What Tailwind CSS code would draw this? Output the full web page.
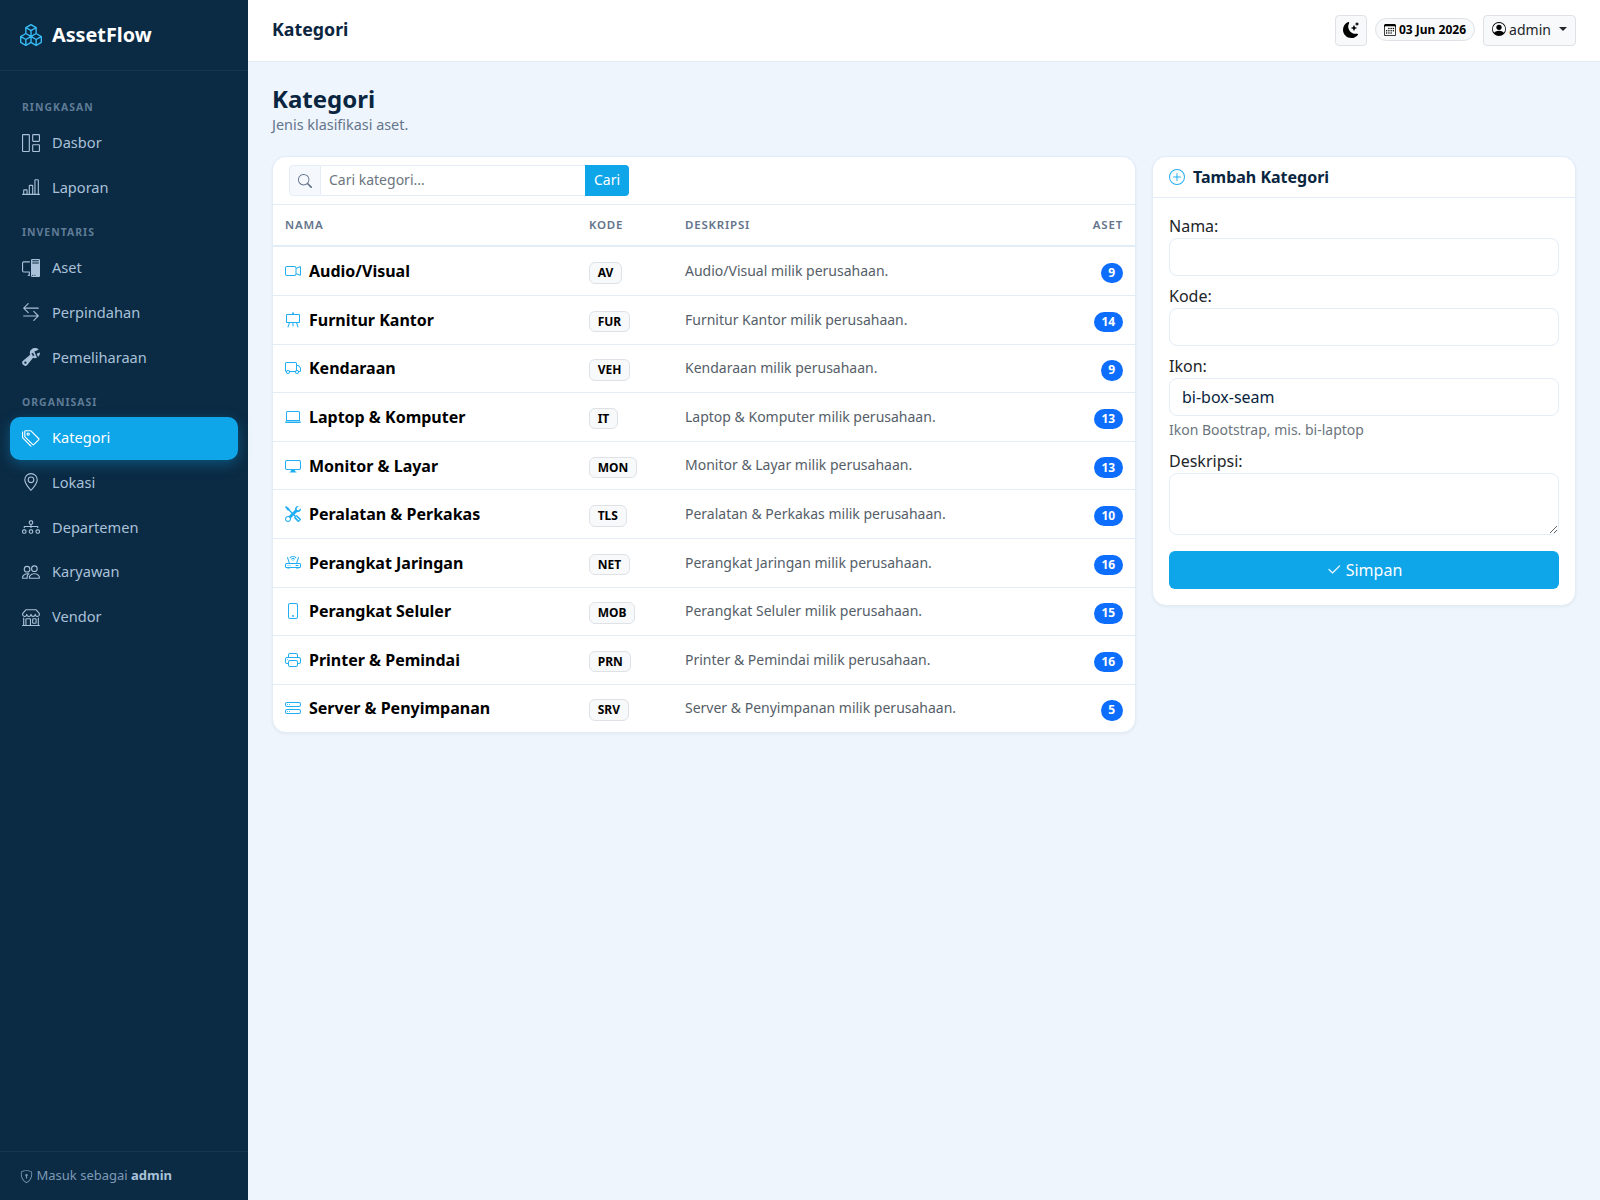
<!doctype html>
<html lang="id">
<head>
<meta charset="utf-8">
<title>Kategori - AssetFlow</title>
<script src="https://cdn.jsdelivr.net/npm/@tailwindcss/browser@4"></script>
</head>
<body class="font-['Noto_Sans',sans-serif] bg-[#eef5fc] text-[#212529]">
<div class="flex h-[1200px] w-[1600px] overflow-hidden">
  <aside class="flex w-[248px] shrink-0 flex-col bg-[#0b2a43] text-[#a9c1d9]">
    <div class="flex h-[71px] items-center gap-[10px] border-b border-[#173450] pb-px pl-[20px]">
      <svg class="size-[22px] text-[#38bdf8]" viewBox="0 0 16 16" fill="currentColor"><path d="M7.752.066a.5.5 0 0 1 .496 0l3.75 2.143a.5.5 0 0 1 .252.434v3.995l3.498 2A.5.5 0 0 1 16 9.07v4.286a.5.5 0 0 1-.252.434l-3.75 2.143a.5.5 0 0 1-.496 0l-3.502-2-3.502 2.001a.5.5 0 0 1-.496 0l-3.75-2.143A.5.5 0 0 1 0 13.357V9.071a.5.5 0 0 1 .252-.434L3.75 6.638V2.643a.5.5 0 0 1 .252-.434L7.752.066ZM4.25 7.504 1.508 9.071l2.742 1.567 2.742-1.567L4.25 7.504ZM7.5 9.933l-2.75 1.571v3.134l2.75-1.571V9.933Zm1 3.134 2.75 1.571v-3.134L8.5 9.933v3.134Zm.508-3.996 2.742 1.567 2.742-1.567-2.742-1.567-2.742 1.567Zm2.242-2.433V3.504L8.5 5.076V8.21l2.75-1.572ZM7.5 8.21V5.076L4.75 3.504v3.134L7.5 8.21ZM5.258 2.643 8 4.21l2.742-1.567L8 1.076 5.258 2.643ZM15 9.933l-2.75 1.571v3.134L15 13.067V9.933ZM3.75 14.638v-3.134L1 9.933v3.134l2.75 1.571Z"/></svg>
      <span class="text-[19.8px] font-bold text-white">AssetFlow</span>
    </div>
    <nav class="flex-1 px-[10px] pt-[14.8px]">
      <div class="px-3 pb-[5.6px] pt-[13px] text-[10.4px] font-bold leading-[16.8px] tracking-[0.1em] text-[#5f7c97]">RINGKASAN</div>
      <a class="mb-0.5 flex items-center gap-3 rounded-[10px] px-3 py-2.5 text-[14.6px] leading-[22.8px]"><svg class="size-[18px]" viewBox="0 0 16 16" fill="currentColor"><path d="M6 1H1v14h5V1zm9 0h-5v5h5V1zm0 9v5h-5v-5h5zM0 1a1 1 0 0 1 1-1h5a1 1 0 0 1 1 1v14a1 1 0 0 1-1 1H1a1 1 0 0 1-1-1V1zm9 0a1 1 0 0 1 1-1h5a1 1 0 0 1 1 1v5a1 1 0 0 1-1 1h-5a1 1 0 0 1-1-1V1zm1 8a1 1 0 0 0-1 1v5a1 1 0 0 0 1 1h5a1 1 0 0 0 1-1v-5a1 1 0 0 0-1-1h-5z"/></svg>Dasbor</a>
      <a class="mb-0.5 flex items-center gap-3 rounded-[10px] px-3 py-2.5 text-[14.6px] leading-[22.8px]"><svg class="size-[18px]" viewBox="0 0 16 16" fill="currentColor"><path d="M11 2a1 1 0 0 1 1-1h2a1 1 0 0 1 1 1v12h.5a.5.5 0 0 1 0 1H.5a.5.5 0 0 1 0-1H1v-3a1 1 0 0 1 1-1h2a1 1 0 0 1 1 1v3h1V7a1 1 0 0 1 1-1h2a1 1 0 0 1 1 1v7h1V2zm1 12h2V2h-2v12zm-3 0V7H7v7h2zm-5 0v-3H2v3h2z"/></svg>Laporan</a>
      <div class="px-3 pb-[5.6px] pt-[13px] text-[10.4px] font-bold leading-[16.8px] tracking-[0.1em] text-[#5f7c97]">INVENTARIS</div>
      <a class="mb-0.5 flex items-center gap-3 rounded-[10px] px-3 py-2.5 text-[14.6px] leading-[22.8px]"><svg class="size-[18px]" viewBox="0 0 16 16" fill="currentColor"><path d="M8 1a1 1 0 0 1 1-1h6a1 1 0 0 1 1 1v14a1 1 0 0 1-1 1H9a1 1 0 0 1-1-1V1Zm1 13.5a.5.5 0 1 0 1 0 .5.5 0 0 0-1 0Zm2 0a.5.5 0 1 0 1 0 .5.5 0 0 0-1 0ZM9.5 1a.5.5 0 0 0 0 1h5a.5.5 0 0 0 0-1h-5ZM9 3.5a.5.5 0 0 0 .5.5h5a.5.5 0 0 0 0-1h-5a.5.5 0 0 0-.5.5ZM1.5 2A1.5 1.5 0 0 0 0 3.5v7A1.5 1.5 0 0 0 1.5 12H6v2h-.5a.5.5 0 0 0 0 1H7v-4H1.5a.5.5 0 0 1-.5-.5v-7a.5.5 0 0 1 .5-.5H7V2H1.5Z"/></svg>Aset</a>
      <a class="mb-0.5 flex items-center gap-3 rounded-[10px] px-3 py-2.5 text-[14.6px] leading-[22.8px]"><svg class="size-[18px]" viewBox="0 0 16 16" fill="currentColor"><path d="M1 11.5a.5.5 0 0 0 .5.5h11.793l-3.147 3.146a.5.5 0 0 0 .708.708l4-4a.5.5 0 0 0 0-.708l-4-4a.5.5 0 0 0-.708.708L13.293 11H1.5a.5.5 0 0 0-.5.5zm14-7a.5.5 0 0 1-.5.5H2.707l3.147 3.146a.5.5 0 1 1-.708.708l-4-4a.5.5 0 0 1 0-.708l4-4a.5.5 0 1 1 .708.708L2.707 4H14.5a.5.5 0 0 1 .5.5z"/></svg>Perpindahan</a>
      <a class="mb-0.5 flex items-center gap-3 rounded-[10px] px-3 py-2.5 text-[14.6px] leading-[22.8px]"><svg class="size-[18px]" viewBox="0 0 16 16" fill="currentColor"><path d="M16 4.5a4.492 4.492 0 0 1-1.703 3.526L13 5l2.959-1.11c.027.2.041.403.041.61Z"/><path d="M11.5 9c.653 0 1.273-.139 1.833-.39L12 5.5 11 3l3.826-1.53A4.5 4.5 0 0 0 7.29 6.092l-6.116 5.096a2.583 2.583 0 1 0 3.638 3.638L9.908 8.71A4.49 4.49 0 0 0 11.5 9Zm-1.292-4.361-.596.893.809-.27a.25.25 0 0 1 .287.377l-.596.893.809-.27.158.475-1.5.5a.25.25 0 0 1-.287-.376l.596-.893-.809.27a.25.25 0 0 1-.287-.377l.596-.893-.809.27-.158-.475 1.5-.5a.25.25 0 0 1 .287.376ZM3 14a1 1 0 1 1 0-2 1 1 0 0 1 0 2Z"/></svg>Pemeliharaan</a>
      <div class="px-3 pb-[5.6px] pt-[13px] text-[10.4px] font-bold leading-[16.8px] tracking-[0.1em] text-[#5f7c97]">ORGANISASI</div>
      <a class="mb-px mt-px flex items-center gap-3 rounded-[10px] bg-[#0ea5e9] px-3 pb-[10.5px] pt-[9.5px] text-[14.6px] leading-[22.8px] text-white shadow-[0_4px_14px_rgba(14,165,233,0.35)]"><svg class="size-[18px]" viewBox="0 0 16 16" fill="currentColor"><path d="M3 2v4.586l7 7L14.586 9l-7-7H3zM2 2a1 1 0 0 1 1-1h4.586a1 1 0 0 1 .707.293l7 7a1 1 0 0 1 0 1.414l-4.586 4.586a1 1 0 0 1-1.414 0l-7-7A1 1 0 0 1 2 6.586V2z"/><path d="M5.5 5a.5.5 0 1 1 0-1 .5.5 0 0 1 0 1zm0 1a1.5 1.5 0 1 0 0-3 1.5 1.5 0 0 0 0 3zM1 7.086a1 1 0 0 0 .293.707L8.75 15.25l-.043.043a1 1 0 0 1-1.414 0l-7-7A1 1 0 0 1 0 7.586V3a1 1 0 0 1 1-1v5.086z"/></svg>Kategori</a>
      <a class="mb-0.5 flex items-center gap-3 rounded-[10px] px-3 py-2.5 text-[14.6px] leading-[22.8px]"><svg class="size-[18px]" viewBox="0 0 16 16" fill="currentColor"><path d="M12.166 8.94c-.524 1.062-1.234 2.12-1.96 3.07A31.493 31.493 0 0 1 8 14.58a31.481 31.481 0 0 1-2.206-2.57c-.726-.95-1.436-2.008-1.96-3.07C3.304 7.867 3 6.862 3 6a5 5 0 0 1 10 0c0 .862-.305 1.867-.834 2.94zM8 16s6-5.686 6-10A6 6 0 0 0 2 6c0 4.314 6 10 6 10z"/><path d="M8 8a2 2 0 1 1 0-4 2 2 0 0 1 0 4zm0 1a3 3 0 1 0 0-6 3 3 0 0 0 0 6z"/></svg>Lokasi</a>
      <a class="mb-0.5 flex items-center gap-3 rounded-[10px] px-3 py-2.5 text-[14.6px] leading-[22.8px]"><svg class="size-[18px]" viewBox="0 0 16 16" fill="currentColor"><path fill-rule="evenodd" d="M6 3.5A1.5 1.5 0 0 1 7.5 2h1A1.5 1.5 0 0 1 10 3.5v1A1.5 1.5 0 0 1 8.5 6v1H14a.5.5 0 0 1 .5.5v1a.5.5 0 0 1-1 0V8h-5v.5a.5.5 0 0 1-1 0V8h-5v.5a.5.5 0 0 1-1 0v-1A.5.5 0 0 1 2 7h5.5V6A1.5 1.5 0 0 1 6 4.5v-1zM8.5 5a.5.5 0 0 0 .5-.5v-1a.5.5 0 0 0-.5-.5h-1a.5.5 0 0 0-.5.5v1a.5.5 0 0 0 .5.5h1zM0 11.5A1.5 1.5 0 0 1 1.5 10h1A1.5 1.5 0 0 1 4 11.5v1A1.5 1.5 0 0 1 2.5 14h-1A1.5 1.5 0 0 1 0 12.5v-1zm1.5-.5a.5.5 0 0 0-.5.5v1a.5.5 0 0 0 .5.5h1a.5.5 0 0 0 .5-.5v-1a.5.5 0 0 0-.5-.5h-1zm4.5.5A1.5 1.5 0 0 1 7.5 10h1a1.5 1.5 0 0 1 1.5 1.5v1A1.5 1.5 0 0 1 8.5 14h-1A1.5 1.5 0 0 1 6 12.5v-1zm1.5-.5a.5.5 0 0 0-.5.5v1a.5.5 0 0 0 .5.5h1a.5.5 0 0 0 .5-.5v-1a.5.5 0 0 0-.5-.5h-1zm4.5.5a1.5 1.5 0 0 1 1.5-1.5h1a1.5 1.5 0 0 1 1.5 1.5v1a1.5 1.5 0 0 1-1.5 1.5h-1a1.5 1.5 0 0 1-1.5-1.5v-1zm1.5-.5a.5.5 0 0 0-.5.5v1a.5.5 0 0 0 .5.5h1a.5.5 0 0 0 .5-.5v-1a.5.5 0 0 0-.5-.5h-1z"/></svg>Departemen</a>
      <a class="mb-0.5 flex items-center gap-3 rounded-[10px] px-3 py-2.5 text-[14.6px] leading-[22.8px]"><svg class="size-[18px]" viewBox="0 0 16 16" fill="currentColor"><path d="M15 14s1 0 1-1-1-4-5-4-5 3-5 4 1 1 1 1h8Zm-7.978-1A.261.261 0 0 1 7 12.996c.001-.264.167-1.03.76-1.72C8.312 10.629 9.282 10 11 10c1.717 0 2.687.63 3.24 1.276.593.69.758 1.457.76 1.72l-.008.002a.274.274 0 0 1-.014.002H7.022ZM11 7a2 2 0 1 0 0-4 2 2 0 0 0 0 4Zm3-2a3 3 0 1 1-6 0 3 3 0 0 1 6 0ZM6.936 9.28a5.88 5.88 0 0 0-1.23-.247A7.35 7.35 0 0 0 5 9c-4 0-5 3-5 4 0 .667.333 1 1 1h4.216A2.238 2.238 0 0 1 5 13c0-1.01.377-2.042 1.09-2.904.243-.294.526-.569.846-.816ZM4.92 10A5.493 5.493 0 0 0 4 13H1c0-.26.164-1.03.76-1.724.545-.636 1.492-1.256 3.16-1.275ZM1.5 5.5a3 3 0 1 1 6 0 3 3 0 0 1-6 0Zm3-2a2 2 0 1 0 0 4 2 2 0 0 0 0-4Z"/></svg>Karyawan</a>
      <a class="mb-0.5 flex items-center gap-3 rounded-[10px] px-3 py-2.5 text-[14.6px] leading-[22.8px]"><svg class="size-[18px]" viewBox="0 0 16 16" fill="currentColor"><path d="M2.97 1.35A1 1 0 0 1 3.73 1h8.54a1 1 0 0 1 .76.35l2.609 3.044A1.5 1.5 0 0 1 16 5.37v.255a2.375 2.375 0 0 1-4.25 1.458A2.371 2.371 0 0 1 9.875 8 2.37 2.37 0 0 1 8 7.083 2.37 2.37 0 0 1 6.125 8a2.37 2.37 0 0 1-1.875-.917A2.375 2.375 0 0 1 0 5.625V5.37a1.5 1.5 0 0 1 .361-.976l2.61-3.045zm1.78 4.275a1.375 1.375 0 0 0 2.75 0 .5.5 0 0 1 1 0 1.375 1.375 0 0 0 2.75 0 .5.5 0 0 1 1 0 1.375 1.375 0 1 0 2.75 0V5.37a.5.5 0 0 0-.12-.325L12.27 2H3.73L1.12 5.045A.5.5 0 0 0 1 5.37v.255a1.375 1.375 0 0 0 2.75 0 .5.5 0 0 1 1 0zM1.5 8.5A.5.5 0 0 1 2 9v6h1v-5a1 1 0 0 1 1-1h3a1 1 0 0 1 1 1v5h6V9a.5.5 0 0 1 1 0v6h.5a.5.5 0 0 1 0 1H.5a.5.5 0 0 1 0-1H1V9a.5.5 0 0 1 .5-.5zM4 15h3v-5H4v5zm5-5a1 1 0 0 1 1-1h2a1 1 0 0 1 1 1v3a1 1 0 0 1-1 1h-2a1 1 0 0 1-1-1v-3zm3 0h-2v3h2v-3z"/></svg>Vendor</a>
    </nav>
    <div class="flex h-[49px] items-center gap-[3.5px] border-t border-[#173450] pl-[20px] text-[13px] text-[#7d9ab6]">
      <svg class="size-[13px]" viewBox="0 0 16 16" fill="currentColor"><path d="M5.338 1.59a61.44 61.44 0 0 0-2.837.856.481.481 0 0 0-.328.39c-.554 4.157.726 7.19 2.253 9.188a10.725 10.725 0 0 0 2.287 2.233c.346.244.652.42.893.533.12.057.218.095.293.118a.55.55 0 0 0 .101.025.615.615 0 0 0 .1-.025c.076-.023.174-.061.294-.118.24-.113.547-.29.893-.533a10.726 10.726 0 0 0 2.287-2.233c1.527-1.997 2.807-5.031 2.253-9.188a.48.48 0 0 0-.328-.39c-.651-.213-1.75-.56-2.837-.855C9.552 1.29 8.531 1.067 8 1.067c-.53 0-1.552.223-2.662.524zM5.072.56C6.157.265 7.31 0 8 0s1.843.265 2.928.56c1.11.3 2.229.655 2.887.87a1.54 1.54 0 0 1 1.044 1.262c.596 4.477-.787 7.795-2.465 9.99a11.775 11.775 0 0 1-2.517 2.453 7.159 7.159 0 0 1-1.048.625c-.28.132-.581.24-.829.24s-.548-.108-.829-.24a7.158 7.158 0 0 1-1.048-.625 11.777 11.777 0 0 1-2.517-2.453C1.928 10.487.545 7.169 1.141 2.692A1.54 1.54 0 0 1 2.185 1.43 62.456 62.456 0 0 1 5.072.56z"/><path d="M9.5 6.5a1.5 1.5 0 0 1-1 1.415l.385 1.99a.5.5 0 0 1-.491.595h-.788a.5.5 0 0 1-.49-.595l.384-1.99a1.5 1.5 0 1 1 2-1.415z"/></svg>
      <span>Masuk sebagai <b class="font-bold text-[#a9c1d9]">admin</b></span>
    </div>
  </aside>

  <main class="flex min-w-0 flex-1 flex-col">
    <header class="flex h-[62px] shrink-0 items-center justify-between border-b border-[#e3edf7] bg-white px-6">
      <div class="pb-0.5 text-[17.8px] font-bold text-[#0a2540]">Kategori</div>
      <div class="flex items-center gap-2">
        <button class="flex h-[31px] w-[32px] items-center justify-center rounded-[4px] border border-[#dee2e6] bg-[#f8f9fa] pb-0.5 text-black"><svg class="size-4" viewBox="0 0 16 16" fill="currentColor"><path d="M6 .278a.768.768 0 0 1 .08.858 7.208 7.208 0 0 0-.878 3.46c0 4.021 3.278 7.277 7.318 7.277.527 0 1.04-.055 1.533-.16a.787.787 0 0 1 .81.316.733.733 0 0 1-.031.893A8.349 8.349 0 0 1 8.344 16C3.734 16 0 12.286 0 7.71 0 4.266 2.114 1.312 5.124.06A.752.752 0 0 1 6 .278z"/><path d="M10.794 3.148a.217.217 0 0 1 .412 0l.387 1.162c.173.518.579.924 1.097 1.097l1.162.387a.217.217 0 0 1 0 .412l-1.162.387a1.734 1.734 0 0 0-1.097 1.097l-.387 1.162a.217.217 0 0 1-.412 0l-.387-1.162A1.734 1.734 0 0 0 9.31 6.593l-1.162-.387a.217.217 0 0 1 0-.412l1.162-.387a1.734 1.734 0 0 0 1.097-1.097l.387-1.162zM13.863.099a.145.145 0 0 1 .274 0l.258.774c.115.346.386.617.732.732l.774.258a.145.145 0 0 1 0 .274l-.774.258a1.156 1.156 0 0 0-.732.732l-.258.774a.145.145 0 0 1-.274 0l-.258-.774a1.156 1.156 0 0 0-.732-.732l-.774-.258a.145.145 0 0 1 0-.274l.774-.258c.346-.115.617-.386.732-.732L13.863.1z"/></svg></button>
        <div class="mb-0.5 flex h-[23px] w-[100px] items-center justify-center gap-[3px] rounded-full border border-[#dee2e6] bg-[#f8f9fa] text-[12px] font-bold text-black"><svg class="size-3" viewBox="0 0 16 16" fill="currentColor"><path d="M14 0H2a2 2 0 0 0-2 2v12a2 2 0 0 0 2 2h12a2 2 0 0 0 2-2V2a2 2 0 0 0-2-2zM1 3.857C1 3.384 1.448 3 2 3h12c.552 0 1 .384 1 .857v10.286c0 .473-.448.857-1 .857H2c-.552 0-1-.384-1-.857V3.857z"/><path d="M6.5 7a1 1 0 1 0 0-2 1 1 0 0 0 0 2zm3 0a1 1 0 1 0 0-2 1 1 0 0 0 0 2zm3 0a1 1 0 1 0 0-2 1 1 0 0 0 0 2zm-9 3a1 1 0 1 0 0-2 1 1 0 0 0 0 2zm3 0a1 1 0 1 0 0-2 1 1 0 0 0 0 2zm3 0a1 1 0 1 0 0-2 1 1 0 0 0 0 2zm3 0a1 1 0 1 0 0-2 1 1 0 0 0 0 2zm-9 3a1 1 0 1 0 0-2 1 1 0 0 0 0 2zm3 0a1 1 0 1 0 0-2 1 1 0 0 0 0 2zm3 0a1 1 0 1 0 0-2 1 1 0 0 0 0 2z"/></svg>03 Jun 2026</div>
        <button class="flex h-[31px] w-[93px] items-center justify-center gap-[3px] rounded-[4px] border border-[#dee2e6] bg-[#f8f9fa] pb-[3px] text-[14px] text-[#212529]"><svg class="size-[14px] text-black" viewBox="0 0 16 16" fill="currentColor"><path d="M11 6a3 3 0 1 1-6 0 3 3 0 0 1 6 0z"/><path fill-rule="evenodd" d="M0 8a8 8 0 1 1 16 0A8 8 0 0 1 0 8zm8-7a7 7 0 0 0-5.468 11.37C3.242 11.226 4.805 10 8 10s4.757 1.225 5.468 2.37A7 7 0 0 0 8 1z"/></svg>admin<span class="ml-[5px] h-0 w-0 border-x-[4.2px] border-t-[4.2px] border-x-transparent border-t-[#212529]"></span></button>
      </div>
    </header>

    <div class="flex-1 px-6 pb-6 pt-[21px]">
      <h1 class="text-[24px] font-bold leading-[32px] text-[#0a2540]">Kategori</h1>
      <p class="mb-[21px] text-[14.4px] leading-[20px] text-[#64748b]">Jenis klasifikasi aset.</p>
      <div class="flex items-start gap-4">
        <section class="w-[864px] overflow-hidden rounded-[14px] border border-[#e3edf7] bg-white shadow-[0_1px_3px_rgba(10,37,64,0.06)]">
          <form class="flex h-[48px] items-start border-b border-[#e3edf7] px-4 pt-2">
            <div class="flex h-[31px] w-[340px]">
              <span class="flex w-8 items-center justify-center rounded-l-[4px] border border-[#e3edf7] bg-[#f5f9fd] text-[#64748b]"><svg class="size-[14px]" viewBox="0 0 16 16" fill="currentColor"><path d="M11.742 10.344a6.5 6.5 0 1 0-1.397 1.398h-.001c.03.04.062.078.098.115l3.85 3.85a1 1 0 0 0 1.415-1.414l-3.85-3.85a1.007 1.007 0 0 0-.115-.1zM12 6.5a5.5 5.5 0 1 1-11 0 5.5 5.5 0 0 1 11 0z"/></svg></span>
              <input class="min-w-0 flex-1 border-y border-[#e3edf7] bg-white px-2 pb-0.5 text-[14px] placeholder:text-[#6c757d]" placeholder="Cari kategori...">
              <button type="button" class="w-11 rounded-r-[4px] bg-[#0ea5e9] pb-0.5 text-[14px] text-white">Cari</button>
            </div>
          </form>
          <div class="grid h-[42.4px] grid-cols-[304px_96px_1fr_auto] items-center border-b-2 border-[#e3edf7] px-3 pb-0.5 text-[11.5px] font-semibold tracking-[0.07em] text-[#64748b]">
            <span>NAMA</span><span class="pl-0">KODE</span><span>DESKRIPSI</span><span>ASET</span>
          </div>

          <div class="grid h-[48.6px] grid-cols-[304px_96px_1fr_auto] items-center border-b border-[#e3edf7] px-3">
            <span class="flex items-center gap-2 text-[16px] font-bold text-black"><svg class="size-4 text-[#22aef2]" viewBox="0 0 16 16" fill="currentColor"><path d="M0 5a2 2 0 0 1 2-2h7.5a2 2 0 0 1 1.983 1.738l3.11-1.382A1 1 0 0 1 16 4.269v7.462a1 1 0 0 1-1.406.913l-3.111-1.382A2 2 0 0 1 9.5 13H2a2 2 0 0 1-2-2V5zm11.5 5.175 3.5 1.556V4.269l-3.5 1.556v4.35zM2 4a1 1 0 0 0-1 1v6a1 1 0 0 0 1 1h7.5a1 1 0 0 0 1-1V5a1 1 0 0 0-1-1H2z"/></svg>Audio/Visual</span>
            <span class="mt-[0.5px]"><b class="inline-block rounded-[6px] border border-[#dee2e6] bg-[#f8f9fa] px-[7.7px] text-[12px] font-bold leading-[19.5px] text-black">AV</b></span>
            <span class="pb-[1.5px] text-[14px] text-[#555e68]">Audio/Visual milik perusahaan.</span>
            <b class="mt-1 rounded-full bg-[#0d6efd] px-[7.8px] py-[4.2px] text-[12px] font-bold leading-[12px] text-white">9</b>
          </div>
          <div class="grid h-[48.6px] grid-cols-[304px_96px_1fr_auto] items-center border-b border-[#e3edf7] px-3">
            <span class="flex items-center gap-2 text-[16px] font-bold text-black"><svg class="size-4 text-[#22aef2]" viewBox="0 0 16 16" fill="currentColor"><path fill-rule="evenodd" d="M8 0a.5.5 0 0 1 .473.337L9.046 2H14a1 1 0 0 1 1 1v7a1 1 0 0 1-1 1h-1.85l1.323 3.837a.5.5 0 1 1-.946.326L11.092 11H8.5v3a.5.5 0 0 1-1 0v-3H4.908l-1.435 4.163a.5.5 0 1 1-.946-.326L3.85 11H2a1 1 0 0 1-1-1V3a1 1 0 0 1 1-1h4.954L7.527.337A.5.5 0 0 1 8 0zM2 3v7h12V3H2z"/></svg>Furnitur Kantor</span>
            <span class="mt-[0.5px]"><b class="inline-block rounded-[6px] border border-[#dee2e6] bg-[#f8f9fa] px-[7.7px] text-[12px] font-bold leading-[19.5px] text-black">FUR</b></span>
            <span class="pb-[1.5px] text-[14px] text-[#555e68]">Furnitur Kantor milik perusahaan.</span>
            <b class="mt-1 rounded-full bg-[#0d6efd] px-[7.8px] py-[4.2px] text-[12px] font-bold leading-[12px] text-white">14</b>
          </div>
          <div class="grid h-[48.6px] grid-cols-[304px_96px_1fr_auto] items-center border-b border-[#e3edf7] px-3">
            <span class="flex items-center gap-2 text-[16px] font-bold text-black"><svg class="size-4 text-[#22aef2]" viewBox="0 0 16 16" fill="currentColor"><path d="M0 3.5A1.5 1.5 0 0 1 1.5 2h9A1.5 1.5 0 0 1 12 3.5V5h1.02a1.5 1.5 0 0 1 1.17.563l1.481 1.85a1.5 1.5 0 0 1 .329.938V10.5a1.5 1.5 0 0 1-1.5 1.5H14a2 2 0 1 1-4 0H5a2 2 0 1 1-3.998-.085A1.5 1.5 0 0 1 0 10.5v-7zm1.294 7.456A1.999 1.999 0 0 1 4.732 11h5.536a2.01 2.01 0 0 1 .732-.732V3.5a.5.5 0 0 0-.5-.5h-9a.5.5 0 0 0-.5.5v7a.5.5 0 0 0 .294.456zM12 10a2 2 0 0 1 1.732 1h.768a.5.5 0 0 0 .5-.5V8.35a.5.5 0 0 0-.11-.312l-1.48-1.85A.5.5 0 0 0 13.02 6H12v4zm-9 1a1 1 0 1 0 0 2 1 1 0 0 0 0-2zm9 0a1 1 0 1 0 0 2 1 1 0 0 0 0-2z"/></svg>Kendaraan</span>
            <span class="mt-[0.5px]"><b class="inline-block rounded-[6px] border border-[#dee2e6] bg-[#f8f9fa] px-[7.7px] text-[12px] font-bold leading-[19.5px] text-black">VEH</b></span>
            <span class="pb-[1.5px] text-[14px] text-[#555e68]">Kendaraan milik perusahaan.</span>
            <b class="mt-1 rounded-full bg-[#0d6efd] px-[7.8px] py-[4.2px] text-[12px] font-bold leading-[12px] text-white">9</b>
          </div>
          <div class="grid h-[48.6px] grid-cols-[304px_96px_1fr_auto] items-center border-b border-[#e3edf7] px-3">
            <span class="flex items-center gap-2 text-[16px] font-bold text-black"><svg class="size-4 text-[#22aef2]" viewBox="0 0 16 16" fill="currentColor"><path d="M13.5 3a.5.5 0 0 1 .5.5V11H2V3.5a.5.5 0 0 1 .5-.5h11zm-11-1A1.5 1.5 0 0 0 1 3.5V12h14V3.5A1.5 1.5 0 0 0 13.5 2h-11zM0 12.5h16a1.5 1.5 0 0 1-1.5 1.5h-13A1.5 1.5 0 0 1 0 12.5z"/></svg>Laptop &amp; Komputer</span>
            <span class="mt-[0.5px]"><b class="inline-block rounded-[6px] border border-[#dee2e6] bg-[#f8f9fa] px-[7.7px] text-[12px] font-bold leading-[19.5px] text-black">IT</b></span>
            <span class="pb-[1.5px] text-[14px] text-[#555e68]">Laptop &amp; Komputer milik perusahaan.</span>
            <b class="mt-1 rounded-full bg-[#0d6efd] px-[7.8px] py-[4.2px] text-[12px] font-bold leading-[12px] text-white">13</b>
          </div>
          <div class="grid h-[48.6px] grid-cols-[304px_96px_1fr_auto] items-center border-b border-[#e3edf7] px-3">
            <span class="flex items-center gap-2 text-[16px] font-bold text-black"><svg class="size-4 text-[#22aef2]" viewBox="0 0 16 16" fill="currentColor"><path d="M0 4s0-2 2-2h12s2 0 2 2v6s0 2-2 2h-4c0 .667.083 1.167.25 1.5H11a.5.5 0 0 1 0 1H5a.5.5 0 0 1 0-1h.75c.167-.333.25-.833.25-1.5H2s-2 0-2-2V4zm1.398-.855a.758.758 0 0 0-.254.302A1.46 1.46 0 0 0 1 4.01V10c0 .325.078.502.145.602.07.105.17.188.302.254a1.464 1.464 0 0 0 .538.143L2.01 11H14c.325 0 .502-.078.602-.145a.758.758 0 0 0 .254-.302 1.464 1.464 0 0 0 .143-.538L15 9.99V4c0-.325-.078-.502-.145-.602a.757.757 0 0 0-.302-.254A1.46 1.46 0 0 0 13.99 3H2c-.325 0-.502.078-.602.145z"/></svg>Monitor &amp; Layar</span>
            <span class="mt-[0.5px]"><b class="inline-block rounded-[6px] border border-[#dee2e6] bg-[#f8f9fa] px-[7.7px] text-[12px] font-bold leading-[19.5px] text-black">MON</b></span>
            <span class="pb-[1.5px] text-[14px] text-[#555e68]">Monitor &amp; Layar milik perusahaan.</span>
            <b class="mt-1 rounded-full bg-[#0d6efd] px-[7.8px] py-[4.2px] text-[12px] font-bold leading-[12px] text-white">13</b>
          </div>
          <div class="grid h-[48.6px] grid-cols-[304px_96px_1fr_auto] items-center border-b border-[#e3edf7] px-3">
            <span class="flex items-center gap-2 text-[16px] font-bold text-black"><svg class="size-4 text-[#22aef2]" viewBox="0 0 16 16" fill="currentColor"><path d="M1 0 0 1l2.2 3.081a1 1 0 0 0 .815.419h.07a1 1 0 0 1 .708.293l2.675 2.675-2.617 2.654A3.003 3.003 0 0 0 0 13a3 3 0 1 0 5.878-.851l2.654-2.617.968.968-.305.914a1 1 0 0 0 .242 1.023l3.27 3.27a.997.997 0 0 0 1.414 0l1.586-1.586a.997.997 0 0 0 0-1.414l-3.27-3.27a1 1 0 0 0-1.023-.242L10.5 9.5l-.96-.96 2.68-2.643A3.005 3.005 0 0 0 16 3c0-.269-.035-.53-.102-.777l-2.14 2.141L12 4l-.364-1.757L13.777.102a3 3 0 0 0-3.675 3.68L7.462 6.46 4.793 3.793a1 1 0 0 1-.293-.707v-.071a1 1 0 0 0-.419-.814L1 0Zm9.646 10.646a.5.5 0 0 1 .708 0l2.914 2.915a.5.5 0 0 1-.707.707l-2.915-2.914a.5.5 0 0 1 0-.708ZM3 11l.471.242.529.026.287.445.445.287.026.529L5 13l-.242.471-.026.529-.445.287-.287.445-.529.026L3 15l-.471-.242L2 14.732l-.287-.445L1.268 14l-.026-.529L1 13l.242-.471.026-.529.445-.287.287-.445.529-.026L3 11Z"/></svg>Peralatan &amp; Perkakas</span>
            <span class="mt-[0.5px]"><b class="inline-block rounded-[6px] border border-[#dee2e6] bg-[#f8f9fa] px-[7.7px] text-[12px] font-bold leading-[19.5px] text-black">TLS</b></span>
            <span class="pb-[1.5px] text-[14px] text-[#555e68]">Peralatan &amp; Perkakas milik perusahaan.</span>
            <b class="mt-1 rounded-full bg-[#0d6efd] px-[7.8px] py-[4.2px] text-[12px] font-bold leading-[12px] text-white">10</b>
          </div>
          <div class="grid h-[48.6px] grid-cols-[304px_96px_1fr_auto] items-center border-b border-[#e3edf7] px-3">
            <span class="flex items-center gap-2 text-[16px] font-bold text-black"><svg class="size-4 text-[#22aef2]" viewBox="0 0 16 16" fill="currentColor"><path d="M5.525 3.025a3.5 3.5 0 0 1 4.95 0 .5.5 0 1 0 .707-.707 4.5 4.5 0 0 0-6.364 0 .5.5 0 0 0 .707.707Z"/><path d="M6.94 4.44a1.5 1.5 0 0 1 2.12 0 .5.5 0 0 0 .708-.708 2.5 2.5 0 0 0-3.536 0 .5.5 0 0 0 .707.707Z"/><path d="M2.974 2.342a.5.5 0 1 0-.948.316L3.806 8H1.5A1.5 1.5 0 0 0 0 9.5v2A1.5 1.5 0 0 0 1.5 13H2a.5.5 0 0 0 .5.5h2A.5.5 0 0 0 5 13h6a.5.5 0 0 0 .5.5h2a.5.5 0 0 0 .5-.5h.5a1.5 1.5 0 0 0 1.5-1.5v-2A1.5 1.5 0 0 0 14.5 8h-2.306l1.78-5.342a.5.5 0 1 0-.948-.316L11.14 8H4.86L2.974 2.342ZM14.5 9a.5.5 0 0 1 .5.5v2a.5.5 0 0 1-.5.5h-13a.5.5 0 0 1-.5-.5v-2a.5.5 0 0 1 .5-.5h13Z"/><path d="M8.5 5.5a.5.5 0 1 1-1 0 .5.5 0 0 1 1 0ZM2.5 10.5a.5.5 0 1 1 1 0 .5.5 0 0 1-1 0Zm2 0a.5.5 0 1 1 1 0 .5.5 0 0 1-1 0Zm6 0a.5.5 0 0 1 .5-.5h2a.5.5 0 0 1 0 1h-2a.5.5 0 0 1-.5-.5Z"/></svg>Perangkat Jaringan</span>
            <span class="mt-[0.5px]"><b class="inline-block rounded-[6px] border border-[#dee2e6] bg-[#f8f9fa] px-[7.7px] text-[12px] font-bold leading-[19.5px] text-black">NET</b></span>
            <span class="pb-[1.5px] text-[14px] text-[#555e68]">Perangkat Jaringan milik perusahaan.</span>
            <b class="mt-1 rounded-full bg-[#0d6efd] px-[7.8px] py-[4.2px] text-[12px] font-bold leading-[12px] text-white">16</b>
          </div>
          <div class="grid h-[48.6px] grid-cols-[304px_96px_1fr_auto] items-center border-b border-[#e3edf7] px-3">
            <span class="flex items-center gap-2 text-[16px] font-bold text-black"><svg class="size-4 text-[#22aef2]" viewBox="0 0 16 16" fill="currentColor"><path d="M11 1a1 1 0 0 1 1 1v12a1 1 0 0 1-1 1H5a1 1 0 0 1-1-1V2a1 1 0 0 1 1-1h6zM5 0a2 2 0 0 0-2 2v12a2 2 0 0 0 2 2h6a2 2 0 0 0 2-2V2a2 2 0 0 0-2-2H5z"/><path d="M8 14a1 1 0 1 0 0-2 1 1 0 0 0 0 2z"/></svg>Perangkat Seluler</span>
            <span class="mt-[0.5px]"><b class="inline-block rounded-[6px] border border-[#dee2e6] bg-[#f8f9fa] px-[7.7px] text-[12px] font-bold leading-[19.5px] text-black">MOB</b></span>
            <span class="pb-[1.5px] text-[14px] text-[#555e68]">Perangkat Seluler milik perusahaan.</span>
            <b class="mt-1 rounded-full bg-[#0d6efd] px-[7.8px] py-[4.2px] text-[12px] font-bold leading-[12px] text-white">15</b>
          </div>
          <div class="grid h-[48.6px] grid-cols-[304px_96px_1fr_auto] items-center border-b border-[#e3edf7] px-3">
            <span class="flex items-center gap-2 text-[16px] font-bold text-black"><svg class="size-4 text-[#22aef2]" viewBox="0 0 16 16" fill="currentColor"><path d="M2.5 8a.5.5 0 1 0 0-1 .5.5 0 0 0 0 1z"/><path d="M5 1a2 2 0 0 0-2 2v2H2a2 2 0 0 0-2 2v3a2 2 0 0 0 2 2h1v1a2 2 0 0 0 2 2h6a2 2 0 0 0 2-2v-1h1a2 2 0 0 0 2-2V7a2 2 0 0 0-2-2h-1V3a2 2 0 0 0-2-2H5zM4 3a1 1 0 0 1 1-1h6a1 1 0 0 1 1 1v2H4V3zm1 5a2 2 0 0 0-2 2v1H2a1 1 0 0 1-1-1V7a1 1 0 0 1 1-1h12a1 1 0 0 1 1 1v3a1 1 0 0 1-1 1h-1v-1a2 2 0 0 0-2-2H5zm7 2v3a1 1 0 0 1-1 1H5a1 1 0 0 1-1-1v-3a1 1 0 0 1 1-1h6a1 1 0 0 1 1 1z"/></svg>Printer &amp; Pemindai</span>
            <span class="mt-[0.5px]"><b class="inline-block rounded-[6px] border border-[#dee2e6] bg-[#f8f9fa] px-[7.7px] text-[12px] font-bold leading-[19.5px] text-black">PRN</b></span>
            <span class="pb-[1.5px] text-[14px] text-[#555e68]">Printer &amp; Pemindai milik perusahaan.</span>
            <b class="mt-1 rounded-full bg-[#0d6efd] px-[7.8px] py-[4.2px] text-[12px] font-bold leading-[12px] text-white">16</b>
          </div>
          <div class="grid h-[47.2px] grid-cols-[304px_96px_1fr_auto] items-center px-3">
            <span class="flex items-center gap-2 text-[16px] font-bold text-black"><svg class="size-4 text-[#22aef2]" viewBox="0 0 16 16" fill="currentColor"><path d="M14 10a1 1 0 0 1 1 1v1a1 1 0 0 1-1 1H2a1 1 0 0 1-1-1v-1a1 1 0 0 1 1-1h12zM2 9a2 2 0 0 0-2 2v1a2 2 0 0 0 2 2h12a2 2 0 0 0 2-2v-1a2 2 0 0 0-2-2H2z"/><path d="M5 11.5a.5.5 0 1 1-1 0 .5.5 0 0 1 1 0zm-2 0a.5.5 0 1 1-1 0 .5.5 0 0 1 1 0zM14 3a1 1 0 0 1 1 1v1a1 1 0 0 1-1 1H2a1 1 0 0 1-1-1V4a1 1 0 0 1 1-1h12zM2 2a2 2 0 0 0-2 2v1a2 2 0 0 0 2 2h12a2 2 0 0 0 2-2V4a2 2 0 0 0-2-2H2z"/><path d="M5 4.5a.5.5 0 1 1-1 0 .5.5 0 0 1 1 0zm-2 0a.5.5 0 1 1-1 0 .5.5 0 0 1 1 0z"/></svg>Server &amp; Penyimpanan</span>
            <span class="mt-[0.5px]"><b class="inline-block rounded-[6px] border border-[#dee2e6] bg-[#f8f9fa] px-[7.7px] text-[12px] font-bold leading-[19.5px] text-black">SRV</b></span>
            <span class="pb-[1.5px] text-[14px] text-[#555e68]">Server &amp; Penyimpanan milik perusahaan.</span>
            <b class="mt-1 rounded-full bg-[#0d6efd] px-[7.8px] py-[4.2px] text-[12px] font-bold leading-[12px] text-white">5</b>
          </div>
        </section>

        <section class="w-[424px] overflow-hidden rounded-[14px] border border-[#e3edf7] bg-white shadow-[0_1px_3px_rgba(10,37,64,0.06)]">
          <div class="flex h-[41px] items-center gap-2 border-b border-[#e3edf7] px-4 text-[16px] font-bold text-[#0a2540]"><svg class="size-4 text-[#22aef2]" viewBox="0 0 16 16" fill="currentColor"><path d="M8 15A7 7 0 1 1 8 1a7 7 0 0 1 0 14zm0 1A8 8 0 1 0 8 0a8 8 0 0 0 0 16z"/><path d="M8 4a.5.5 0 0 1 .5.5v3h3a.5.5 0 0 1 0 1h-3v3a.5.5 0 0 1-1 0v-3h-3a.5.5 0 0 1 0-1h3v-3A.5.5 0 0 1 8 4z"/></svg>Tambah Kategori</div>
          <form class="flex flex-col p-4">
            <label class="text-[16px] leading-6">Nama:</label>
            <input class="mb-2 h-[38px] rounded-[8px] border border-[#e3edf7] bg-white px-3 text-[16px] text-[#0a2540]">
            <label class="text-[16px] leading-6">Kode:</label>
            <input class="mb-2 h-[38px] rounded-[8px] border border-[#e3edf7] bg-white px-3 text-[16px] text-[#0a2540]">
            <label class="text-[16px] leading-6">Ikon:</label>
            <input class="h-[38px] rounded-[8px] border border-[#e3edf7] bg-white px-3 text-[16px] text-[#0a2540]" value="bi-box-seam">
            <div class="mb-[9px] mt-[3px] text-[14px] leading-[21px] text-[#6c757d]">Ikon Bootstrap, mis. bi-laptop</div>
            <label class="text-[16px] leading-6">Deskripsi:</label>
            <textarea class="mb-4 h-[62px] resize-y rounded-[8px] border border-[#e3edf7] bg-white px-3 py-1.5 text-[16px] text-[#0a2540]"></textarea>
            <button type="button" class="flex h-[38px] items-center justify-center gap-1 rounded-[6px] bg-[#0ea5e9] text-[16px] text-white"><svg class="size-4" viewBox="0 0 16 16" fill="currentColor" stroke="currentColor" stroke-width="0.4"><path d="M13.854 3.646a.5.5 0 0 1 0 .708l-7 7a.5.5 0 0 1-.708 0l-3.5-3.5a.5.5 0 1 1 .708-.708L6.5 10.293l6.646-6.647a.5.5 0 0 1 .708 0z"/></svg>Simpan</button>
          </form>
        </section>
      </div>
    </div>
  </main>
</div>
</body>
</html>
